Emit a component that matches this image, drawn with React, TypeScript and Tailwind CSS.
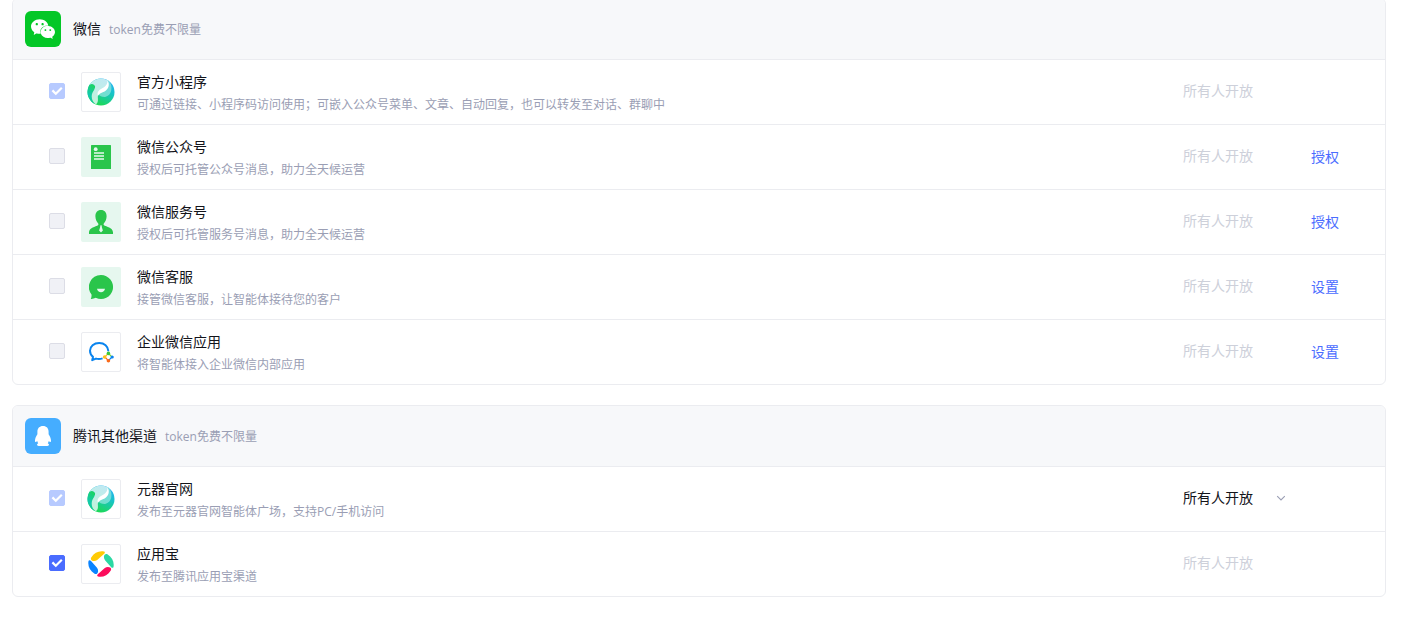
import type { ReactNode } from "react";
import { SiWechat } from "react-icons/si";

type Channel = {
  id: string;
  name: string;
  desc: string;
  icon: ReactNode;
  tinted?: boolean;
  checked?: boolean;
  locked?: boolean;
  canChoose?: boolean;
  action?: string;
};

function YuanqiIcon({ id }: { id: string }) {
  return (
    <svg width="28" height="28" viewBox="0 0 28 28" aria-hidden="true">
      <defs>
        <linearGradient id={`${id}-base`} x1="0.85" y1="0.15" x2="0.45" y2="0.95">
          <stop offset="0" stopColor="#22b4ee" />
          <stop offset="0.4" stopColor="#18c4c4" />
          <stop offset="1" stopColor="#1cd85c" />
        </linearGradient>
        <linearGradient id={`${id}-left`} x1="0.6" y1="0" x2="0.3" y2="1">
          <stop offset="0" stopColor="#1cd460" />
          <stop offset="0.6" stopColor="#12c8b0" />
          <stop offset="1" stopColor="#18d080" />
        </linearGradient>
        <linearGradient id={`${id}-top`} x1="0.7" y1="0" x2="0.3" y2="1">
          <stop offset="0" stopColor="#bfe9f2" />
          <stop offset="1" stopColor="#c2f3da" />
        </linearGradient>
      </defs>
      <circle cx="14" cy="14" r="13.5" fill={`url(#${id}-base)`} />
      <path
        d="M2.6 6.8C4.6 5.4 7.6 6 8.1 8.6C8.3 11.4 4.9 14 4.7 18.4C4.6 21.4 6 24 8.4 26.3A13.5 13.5 0 0 1 2.6 6.8Z"
        fill={`url(#${id}-left)`}
      />
      <path
        d="M2.6 6.8A13.5 13.5 0 0 1 20.6 2.2C22.4 6.6 19.6 9.8 16.2 11.6C12 13.8 10.6 15.4 10.8 18.6C11 22.2 11.4 24.4 8.8 26.3C6.2 24.6 4.6 22 4.7 18.2C4.9 14 8.3 11.6 8.1 8.6C7.6 6 4.6 5.4 2.6 6.8Z"
        fill={`url(#${id}-top)`}
      />
      <path
        d="M20.4 2.1C23.6 4 25.2 8 24.2 12.4C23.2 17.2 19.2 19.6 15.6 18.8C12.8 18.2 11.2 16.6 11.1 15C12.4 12.8 16 12.2 18.4 10C20.6 8 21.2 5 20.4 2.1Z"
        fill="#8fe6dc"
        fillOpacity="0.75"
      />
      <path
        d="M20.4 2.1C23.2 6.4 21.6 11.4 17.6 13.4C14.2 15 11.4 15.6 10.8 18.8C9.8 14.4 11.6 12.2 14.8 10.6C18.8 8.6 20.8 6 20.4 2.1Z"
        fill="#ffffff"
      />
    </svg>
  );
}

function OfficialAccountIcon() {
  return (
    <svg width="20" height="24" viewBox="0 0 20 24" aria-hidden="true">
      <rect width="20" height="24" rx="0.5" fill="#2ac54b" />
      <circle cx="4.7" cy="4.2" r="1.9" fill="#e6f7ef" />
      <path d="M3 8H13M3 11H13M3 14H13" stroke="#e6f7ef" strokeWidth="1.4" />
    </svg>
  );
}

function ServiceAccountIcon() {
  return (
    <svg width="24" height="24" viewBox="0 0 24 24" aria-hidden="true">
      <path
        d="M12 0C15.6 0 17.7 2.6 17.6 6.4C17.5 9.4 16.4 11.7 14.8 13.4C14.3 14.2 14.6 15.2 15.8 15.7C20 17.2 24 18.6 24 22.6V24H0V22.6C0 18.6 4 17.2 8.2 15.7C9.4 15.2 9.7 14.2 9.2 13.4C7.6 11.7 6.5 9.4 6.4 6.4C6.3 2.6 8.4 0 12 0Z"
        fill="#2ac54b"
      />
      <path d="M11 15.4H13L12.7 16.8L13.9 20.4L12 22.4L10.1 20.4L11.3 16.8Z" fill="#e6f7ef" />
    </svg>
  );
}

function CustomerServiceIcon() {
  return (
    <svg width="24" height="24" viewBox="0 0 24 24" aria-hidden="true">
      <path
        d="M12 0A12 12 0 1 1 6.8 22.8C5.2 23.6 3.6 24 1.8 23.9C2.5 22.6 2.7 20.9 2.5 19.4A12 12 0 0 1 12 0Z"
        fill="#2ac54b"
      />
      <path d="M8 13.8H16C15.6 16 14 17.2 12 17.2S8.4 16 8 13.8Z" fill="#e6f7ef" />
    </svg>
  );
}

function WecomIcon() {
  return (
    <svg width="26" height="22" viewBox="0 0 26 22" fill="none" aria-hidden="true">
      <path
        d="M20.4 10.2C20.2 5 16.2 2 11.2 2C5.9 2 2 5.4 2 9.8C2 12.4 3.2 14.4 5 15.8L4.2 19.2L8 17.6C10 18.2 12.4 18.1 14.6 17.4"
        stroke="#0a84ee"
        strokeWidth="2"
        strokeLinejoin="round"
      />
      <path d="M20.4 12.4L24 16L20.4 19.6L16.8 16Z" fill="#ffffff" />
      <path d="M20.4 12.4L24 16" stroke="#7ad03a" strokeWidth="1.2" />
      <path d="M24 16L20.4 19.6" stroke="#0a84ee" strokeWidth="1.2" />
      <path d="M20.4 19.6L16.8 16" stroke="#fa6a1a" strokeWidth="1.2" />
      <path d="M16.8 16L20.4 12.4" stroke="#fbc11a" strokeWidth="1.2" />
      <circle cx="20.4" cy="12.4" r="1.8" fill="#3cc83a" />
      <circle cx="24.2" cy="16" r="1.6" fill="#0a84ee" />
      <circle cx="20.4" cy="19.8" r="1.8" fill="#fa6a1a" />
      <circle cx="16.6" cy="16" r="1.8" fill="#fbc11a" />
    </svg>
  );
}

function YingyongbaoIcon() {
  return (
    <svg width="26" height="26" viewBox="0 0 26 26" aria-hidden="true">
      <path d="M3.2 6.6C6.2 1.6 11 -0.4 16 0.5C17.2 0.8 17 2 16.2 2.8L9.2 9C7.4 10.4 5.2 10.4 3.8 9.4C2.9 8.7 2.6 7.6 3.2 6.6Z" fill="#ffcb05" />
      <path d="M19.4 3.2C24.4 6.2 26.4 11 25.5 16C25.2 17.2 24 17 23.2 16.2L17 9.2C15.6 7.4 15.6 5.2 16.6 3.8C17.3 2.9 18.4 2.6 19.4 3.2Z" fill="#2bd8a3" />
      <path d="M22.8 19.4C19.8 24.4 15 26.4 10 25.5C8.8 25.2 9 24 9.8 23.2L16.8 17C18.6 15.6 20.8 15.6 22.2 16.6C23.1 17.3 23.4 18.4 22.8 19.4Z" fill="#fc0d5c" />
      <path d="M6.6 22.8C1.6 19.8 -0.4 15 0.5 10C0.8 8.8 2 9 2.8 9.8L9 16.8C10.4 18.6 10.4 20.8 9.4 22.2C8.7 23.1 7.6 23.4 6.6 22.8Z" fill="#0a84ff" />
    </svg>
  );
}

function PenguinIcon() {
  return (
    <svg width="16" height="20" viewBox="0 0 16 20" aria-hidden="true">
      <path
        d="M8 0C11.6 0 13.6 2.4 13.6 5.8V8.2C14.8 10 16 12.4 16 14.4C16 15.6 15.6 16.1 15 15.9C14.5 15.7 14.1 15.4 13.8 15C13.6 15.9 13.2 16.7 12.8 17.2C13.6 17.6 14 18.1 14 18.7C14 19.6 12.8 20 11 20H5C3.2 20 2 19.6 2 18.7C2 18.1 2.4 17.6 3.2 17.2C2.8 16.7 2.4 15.9 2.2 15C1.9 15.4 1.5 15.7 1 15.9C0.4 16.1 0 15.6 0 14.4C0 12.4 1.2 10 2.4 8.2V5.8C2.4 2.4 4.4 0 8 0Z"
        fill="#ffffff"
      />
    </svg>
  );
}

const wechatChannels: Channel[] = [
  {
    id: "miniapp",
    name: "官方小程序",
    desc: "可通过链接、小程序码访问使用；可嵌入公众号菜单、文章、自动回复，也可以转发至对话、群聊中",
    icon: <YuanqiIcon id="miniapp" />,
    checked: true,
    locked: true,
  },
  {
    id: "official",
    name: "微信公众号",
    desc: "授权后可托管公众号消息，助力全天候运营",
    icon: <OfficialAccountIcon />,
    tinted: true,
    locked: true,
    action: "授权",
  },
  {
    id: "service",
    name: "微信服务号",
    desc: "授权后可托管服务号消息，助力全天候运营",
    icon: <ServiceAccountIcon />,
    tinted: true,
    locked: true,
    action: "授权",
  },
  {
    id: "kefu",
    name: "微信客服",
    desc: "接管微信客服，让智能体接待您的客户",
    icon: <CustomerServiceIcon />,
    tinted: true,
    locked: true,
    action: "设置",
  },
  {
    id: "wecom",
    name: "企业微信应用",
    desc: "将智能体接入企业微信内部应用",
    icon: <WecomIcon />,
    locked: true,
    action: "设置",
  },
];

const tencentChannels: Channel[] = [
  {
    id: "yuanqi",
    name: "元器官网",
    desc: "发布至元器官网智能体广场，支持PC/手机访问",
    icon: <YuanqiIcon id="yuanqi" />,
    checked: true,
    locked: true,
    canChoose: true,
  },
  {
    id: "yyb",
    name: "应用宝",
    desc: "发布至腾讯应用宝渠道",
    icon: <YingyongbaoIcon />,
    checked: true,
  },
];

function ChannelRow({ channel }: { channel: Channel }) {
  const { id, name, desc, icon, tinted, checked, locked, canChoose, action } = channel;
  return (
    <li className="flex items-center border-t border-[#ebecf0] py-3 pl-9">
      <span className="mb-0.5 grid shrink-0 place-items-center">
        <input
          id={id}
          type="checkbox"
          defaultChecked={checked}
          disabled={locked}
          className="peer col-start-1 row-start-1 size-4 appearance-none rounded-xs border border-[#dcdde6] bg-white checked:border-[#4a6cff] checked:bg-[#4a6cff] disabled:bg-[#f0f1f6] disabled:checked:border-[#b7caff] disabled:checked:bg-[#b7caff]"
        />
        <svg
          viewBox="0 0 16 16"
          fill="none"
          className="pointer-events-none invisible col-start-1 row-start-1 size-4 peer-checked:visible"
          aria-hidden="true"
        >
          <path d="M3.4 7.4L6.8 10.8L12.8 4.8" stroke="#ffffff" strokeWidth="2.2" />
        </svg>
      </span>
      <span
        className={
          tinted
            ? "ml-4 flex size-10 shrink-0 items-center justify-center rounded-xs bg-[#e6f7ef]"
            : "ml-4 flex size-10 shrink-0 items-center justify-center rounded-xs border border-[#ebecf0] bg-white"
        }
      >
        {icon}
      </span>
      <div className="-mb-0.5 ml-4 min-w-0 flex-1 self-start">
        <label htmlFor={id} className="block text-sm leading-5 text-[#13141a]">
          {name}
        </label>
        <p className="mt-1 text-xs leading-[18px] text-[#9a9eb4]">{desc}</p>
      </div>
      <div className="mb-0.5 flex w-32 shrink-0 items-center">
        <select
          aria-label={`${name}开放范围`}
          disabled={!canChoose}
          className="w-[92px] appearance-none text-sm leading-5 text-[#13141a] disabled:text-[#cdd0da] disabled:opacity-100"
        >
          <option>所有人开放</option>
        </select>
        {canChoose && (
          <svg width="12" height="12" viewBox="0 0 12 12" fill="none" aria-hidden="true">
            <path d="M2.2 4.2L6 8L9.8 4.2" stroke="#9a9eb4" strokeWidth="1.1" />
          </svg>
        )}
      </div>
      <div className="w-[74px] shrink-0 text-sm leading-5">
        {action && (
          <a href="#" className="text-[#4a6cff]">
            {action}
          </a>
        )}
      </div>
    </li>
  );
}

function ChannelGroup({ title, logo, channels }: { title: string; logo: ReactNode; channels: Channel[] }) {
  return (
    <section className="overflow-hidden rounded-md border border-[#ebecf0]">
      <header className="flex items-center bg-[#f7f8fa] p-3">
        {logo}
        <div className="ml-3 flex items-baseline gap-2">
          <h2 className="text-sm leading-5 text-[#13141a]">{title}</h2>
          <span className="text-xs leading-5 text-[#9a9eb4]">token免费不限量</span>
        </div>
      </header>
      <ul>
        {channels.map((c) => (
          <ChannelRow key={c.id} channel={c} />
        ))}
      </ul>
    </section>
  );
}

export default function App() {
  return (
    <main className="-mt-0.5 flex flex-col gap-5 bg-white pr-[23px] pb-5 pl-3 font-['Open_Sans','Noto_Sans_CJK_SC',sans-serif]">
      <ChannelGroup
        title="微信"
        logo={
          <span className="flex size-9 items-center justify-center rounded-md bg-[#04c727] text-white">
            <SiWechat size={24} />
          </span>
        }
        channels={wechatChannels}
      />
      <ChannelGroup
        title="腾讯其他渠道"
        logo={
          <span className="flex size-9 items-center justify-center rounded-md bg-[#45adff]">
            <PenguinIcon />
          </span>
        }
        channels={tencentChannels}
      />
    </main>
  );
}
